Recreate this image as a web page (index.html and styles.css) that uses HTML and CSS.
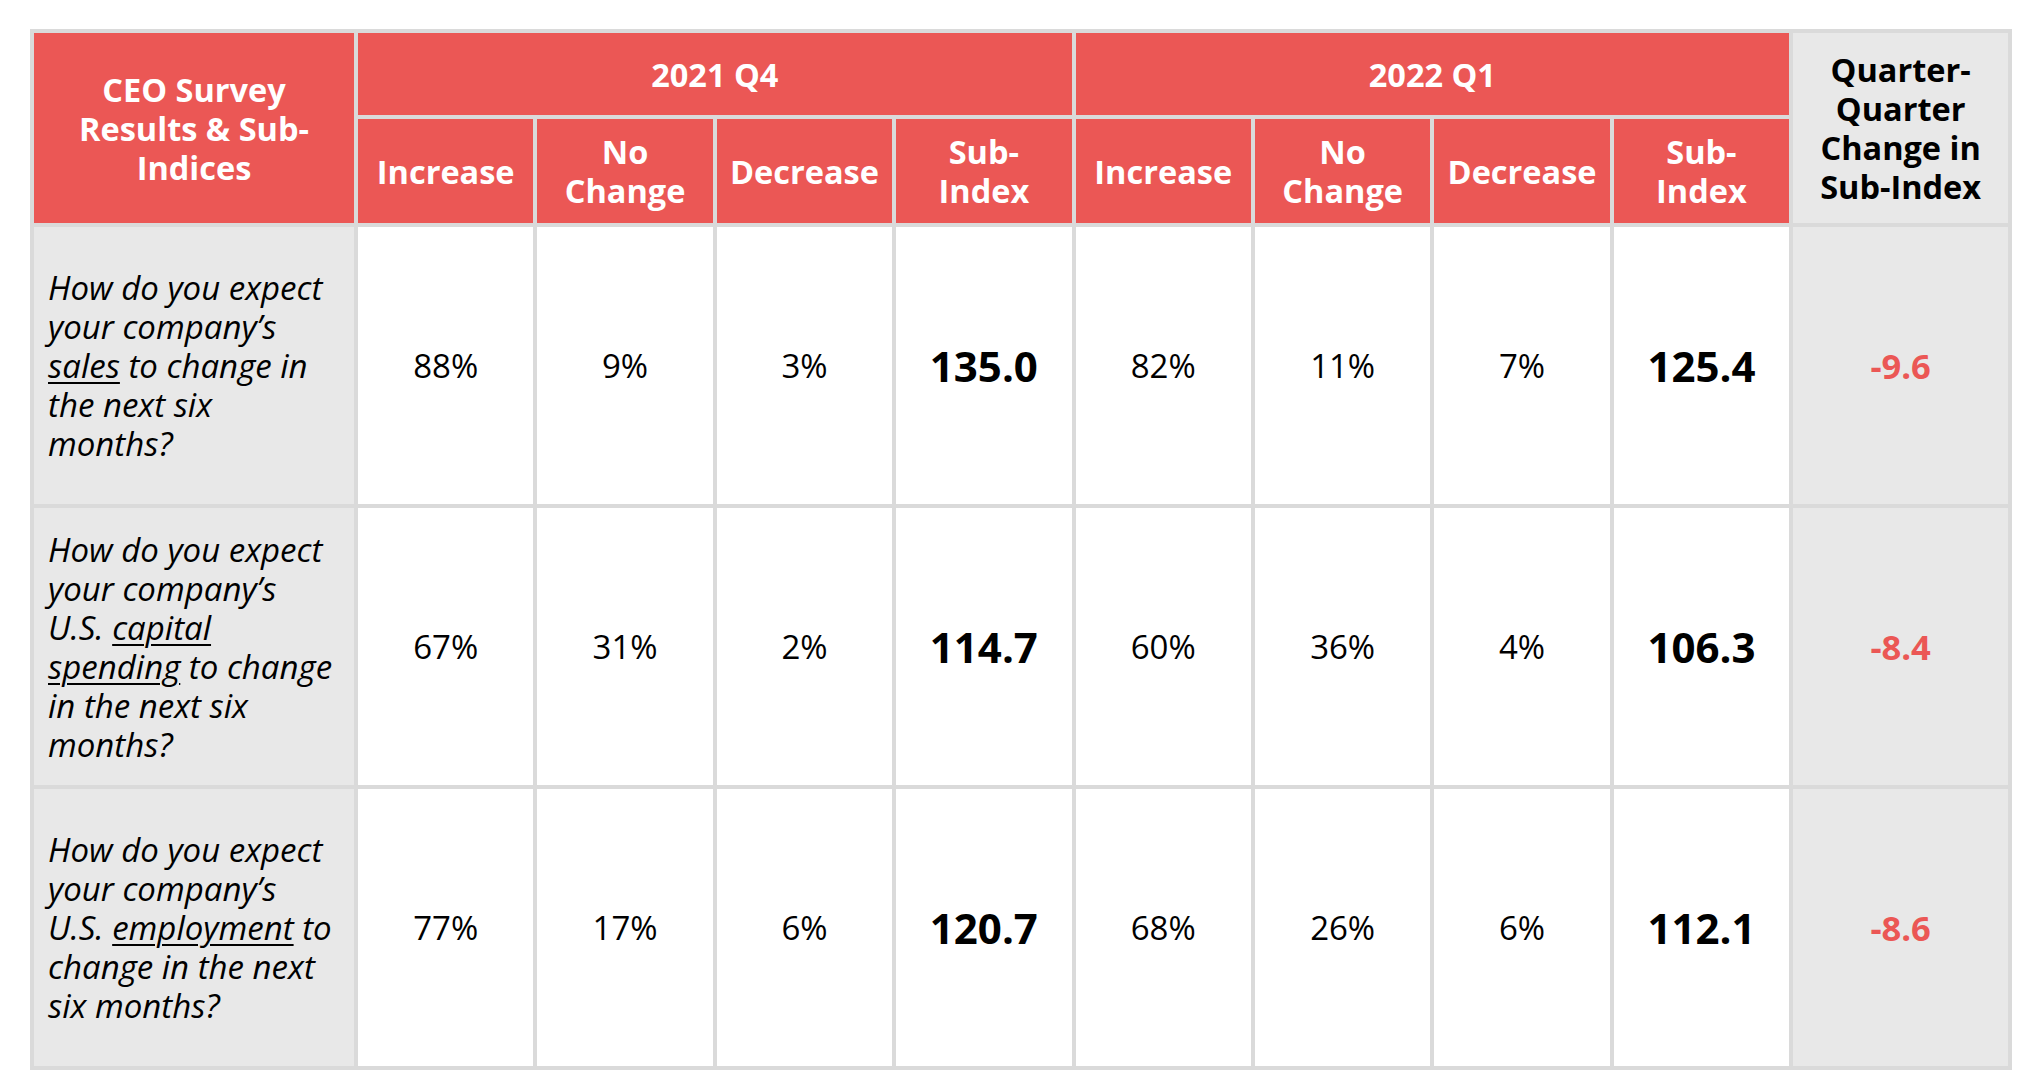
FILE: index.html
```html
<!DOCTYPE html>
<html lang="en">
<head>
<meta charset="utf-8">
<title>CEO Survey Results &amp; Sub-Indices</title>
<link rel="stylesheet" href="styles.css">
</head>
<body>
<div class="table">
  <div class="cell head corner">CEO Survey Results &amp; Sub-Indices</div>
  <div class="cell head group q4">2021 Q4</div>
  <div class="cell head group q1">2022 Q1</div>
  <div class="cell head-gray change">Quarter-Quarter Change in Sub-Index</div>

  <div class="cell head sub">Increase</div>
  <div class="cell head sub">No<br>Change</div>
  <div class="cell head sub">Decrease</div>
  <div class="cell head sub">Sub-<br>Index</div>
  <div class="cell head sub">Increase</div>
  <div class="cell head sub">No<br>Change</div>
  <div class="cell head sub">Decrease</div>
  <div class="cell head sub">Sub-<br>Index</div>

  <div class="cell question"><p class="q-text">How do you expect your company’s <u>sales</u> to change in the next six months?</p></div>
  <div class="cell val">88%</div>
  <div class="cell val">9%</div>
  <div class="cell val">3%</div>
  <div class="cell val idx">135.0</div>
  <div class="cell val">82%</div>
  <div class="cell val">11%</div>
  <div class="cell val">7%</div>
  <div class="cell val idx">125.4</div>
  <div class="cell delta">-9.6</div>

  <div class="cell question"><p class="q-text">How do you expect your company’s U.S. <u>capital spending</u> to change in the next six months?</p></div>
  <div class="cell val">67%</div>
  <div class="cell val">31%</div>
  <div class="cell val">2%</div>
  <div class="cell val idx">114.7</div>
  <div class="cell val">60%</div>
  <div class="cell val">36%</div>
  <div class="cell val">4%</div>
  <div class="cell val idx">106.3</div>
  <div class="cell delta">-8.4</div>

  <div class="cell question"><p class="q-text">How do you expect your company’s U.S. <u>employment</u> to change in the next six months?</p></div>
  <div class="cell val">77%</div>
  <div class="cell val">17%</div>
  <div class="cell val">6%</div>
  <div class="cell val idx">120.7</div>
  <div class="cell val">68%</div>
  <div class="cell val">26%</div>
  <div class="cell val">6%</div>
  <div class="cell val idx">112.1</div>
  <div class="cell delta">-8.6</div>
</div>
</body>
</html>
```

FILE: styles.css
```css
html, body {
  margin: 0;
  padding: 0;
  background: #ffffff;
}

body {
  padding: 29px 0 0 30px;
  font-family: "Open Sans", "Noto Sans", sans-serif;
  color: #000000;
}

.table {
  display: grid;
  width: 1982px;
  box-sizing: border-box;
  grid-template-columns: 320px repeat(8, 175.4px) 215px;
  grid-template-rows: 82px 104px 277px 277px 277px;
  gap: 4px;
  padding: 4px;
  background: #dadada;
}

.cell {
  display: flex;
  align-items: center;
  justify-content: center;
  text-align: center;
  box-sizing: border-box;
}

.head {
  background: #eb5755;
  color: #ffffff;
  font-weight: 700;
  font-size: 32.5px;
  line-height: 39px;
}

.corner {
  grid-row: 1 / span 2;
  padding: 0 14px;
}

.group.q4 {
  grid-column: 2 / span 4;
}

.group.q1 {
  grid-column: 6 / span 4;
}

.head-gray {
  background: #e8e8e8;
  color: #000000;
  font-weight: 700;
  font-size: 32.5px;
  line-height: 39px;
}

.change {
  grid-column: 10;
  grid-row: 1 / span 2;
  padding: 0 10px;
}

.question {
  background: #e8e8e8;
  justify-content: flex-start;
  text-align: left;
  padding: 0 14px;
}

.q-text {
  margin: 0;
  font-style: italic;
  font-size: 33px;
  line-height: 39px;
}

.q-text u {
  text-decoration-thickness: 2px;
  text-underline-offset: 4px;
}

.val {
  background: #ffffff;
  font-size: 33px;
}

.idx {
  font-weight: 700;
  font-size: 42px;
}

.delta {
  background: #e8e8e8;
  color: #eb5755;
  font-weight: 700;
  font-size: 34.5px;
}
```
